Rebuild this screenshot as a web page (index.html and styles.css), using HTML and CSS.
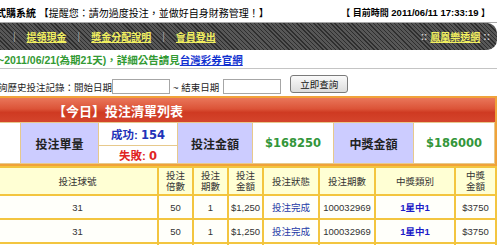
FILE: index.html
```html
<!DOCTYPE html>
<html lang="zh-Hant">
<head>
  <meta charset="UTF-8">
  <meta name="viewport" content="width=device-width, initial-scale=1.0">
  <title>投注清單列表</title>
  <link rel="stylesheet" href="styles.css">
</head>
<body>

  <div class="page">

    <!-- Top bar -->
    <div class="topbar">
      <div class="title"><b>式購系統</b> 【提醒您：請勿過度投注，並做好自身財務管理！】</div>
      <div class="clock">【 目前時間 <span class="num">2011/06/11 17:33:19</span> 】</div>
    </div>

    <!-- Menu -->
    <div class="menu">
      <div class="menu-links">
        <span class="sep">|</span><a href="#">提領現金</a>
        <span class="sep">|</span><a href="#">獎金分配說明</a>
        <span class="sep">|</span><a href="#">會員登出</a>
      </div>
      <div class="menu-site">
        <span class="dots">::</span><a href="#">鳳凰樂透網</a><span class="dots">::</span>
      </div>
    </div>

    <!-- Notice -->
    <div class="notice">~2011/06/21(為期21天)，詳細公告請見<a href="#">台灣彩券官網</a></div>

    <!-- Search -->
    <form class="search">
      <span class="label">詢歷史投注記錄：開始日期</span>
      <input type="text" class="date">
      <span class="label tilde">~ 結束日期</span>
      <input type="text" class="date">
      <button type="button">立即查詢</button>
    </form>

    <!-- Today summary -->
    <div class="today">
      <div class="today-title">【今日】投注清單列表</div>
      <table class="summary">
        <colgroup>
          <col style="width:24px"><col style="width:78px"><col style="width:79px">
          <col style="width:75px"><col style="width:81px"><col style="width:80px"><col>
        </colgroup>
        <tr class="top">
          <td rowspan="2"></td>
          <th rowspan="2">投注單量</th>
          <td class="ok">成功: <span class="n">154</span></td>
          <th rowspan="2">投注金額</th>
          <td rowspan="2" class="money">$168250</td>
          <th rowspan="2">中獎金額</th>
          <td rowspan="2" class="money">$186000</td>
        </tr>
        <tr class="bottom">
          <td class="fail">失敗: <span class="n">0</span></td>
        </tr>
      </table>
    </div>

    <!-- Bet list -->
    <table class="bets">
      <colgroup>
        <col style="width:161px"><col style="width:35px"><col style="width:35px"><col style="width:35px">
        <col style="width:56px"><col style="width:56px"><col style="width:80px"><col>
      </colgroup>
      <tr class="head">
        <th>投注球號</th>
        <th>投注<br>倍數</th>
        <th>投注<br>期數</th>
        <th>投注<br>金額</th>
        <th>投注狀態</th>
        <th>投注期數</th>
        <th>中獎類別</th>
        <th>中獎<br>金額</th>
      </tr>
      <tr>
        <td>31</td><td>50</td><td>1</td><td>$1,250</td>
        <td class="status">投注完成</td><td>100032969</td>
        <td class="prize">1星中1</td><td>$3750</td>
      </tr>
      <tr>
        <td>31</td><td>50</td><td>1</td><td>$1,250</td>
        <td class="status">投注完成</td><td>100032969</td>
        <td class="prize">1星中1</td><td>$3750</td>
      </tr>
      <tr>
        <td>31</td><td>50</td><td>1</td><td>$1,250</td>
        <td class="status">投注完成</td><td>100032969</td>
        <td class="prize">1星中1</td><td>$3750</td>
      </tr>
    </table>

  </div>

</body>
</html>
```

FILE: styles.css
```css
/* Basic Styling */
* {
  box-sizing: border-box;
}
body {
  margin: 0;
  background: #fff;
  color: #222;
  font-family: "Liberation Sans", "Noto Sans CJK TC", sans-serif;
  font-size: 10px;
  overflow: hidden;
}
a {
  text-decoration: underline;
}

/* page is cropped on the left */
.page {
  width: 501px;
  margin-left: -4px;
}

/* Top bar */
.topbar {
  height: 23px;
  display: flex;
  justify-content: space-between;
  align-items: center;
  padding: 2px 7px 0 0;
  border-bottom: 1px solid #a8a8a8;
  color: #000;
}
.title b {
  font-weight: bold;
}
.clock {
  font-size: 9px;
  font-weight: bold;
}
.clock .num {
  font-size: 9.5px;
}

/* Menu */
.menu {
  height: 27px;
  display: flex;
  justify-content: space-between;
  align-items: center;
  padding-right: 7px;
  border-radius: 0 10px 10px 0;
  background: repeating-linear-gradient(45deg, #2e2e2e 0 1px, #575757 1px 3px);
}
.menu-links {
  display: flex;
  align-items: center;
  padding-left: 6px;
}
.menu a {
  color: #f2f060;
  font-weight: bold;
}
.sep {
  color: #a0a0a0;
  margin: 0 11px;
}
.menu-site {
  display: flex;
  align-items: center;
  gap: 3px;
}
.dots {
  color: #d0d0d0;
  font-size: 10px;
  font-weight: bold;
}

/* Notice */
.notice {
  height: 19px;
  padding: 2px 0 0 2px;
  border-bottom: 1px solid #c4c4c4;
  color: #339a33;
  font-size: 10.5px;
  font-weight: bold;
}
.notice a {
  color: #1030d0;
}

/* Search */
.search {
  height: 27px;
  margin: 0;
  padding: 8px 0 0 2px;
  display: flex;
  align-items: center;
}
.search .label {
  font-size: 9.5px;
  color: #222;
}
.search .tilde {
  margin: 0 4px 0 3px;
}
.date {
  width: 58px;
  height: 15px;
  border: 1px solid #a6a6a6;
  padding: 0;
}
.search button {
  width: 58px;
  height: 18px;
  margin: 0 0 5px 9px;
  padding: 0;
  border: 1px solid #7a7a7a;
  border-radius: 3px;
  background: linear-gradient(#fafafa, #dcdcdc);
  font-family: "Noto Sans CJK TC", sans-serif;
  font-size: 9.5px;
  color: #111;
}

/* Today summary */
.today {
  border: 2px solid #f0a23a;
  border-left: none;
}
.today-title {
  height: 24px;
  padding-left: 57px;
  display: flex;
  align-items: center;
  color: #fff;
  font-size: 13px;
  font-weight: bold;
  background: linear-gradient(#e9765a, #dc5438 45%, #cf3a22 60%, #d4452c);
}
.summary {
  width: 100%;
  table-layout: fixed;
  border-collapse: collapse;
}
.summary td, .summary th {
  border: 1px solid #e7c98c;
  padding: 0;
  text-align: center;
  background: #fff;
}
.summary th {
  background: #ccccff;
  font-size: 12px;
  font-weight: bold;
  color: #222;
}
.summary .top td.ok {
  height: 23px;
}
.summary .bottom td {
  height: 18px;
}
.ok, .fail {
  font-size: 11.5px;
  font-weight: bold;
}
.ok {
  color: #2232b8;
}
.fail {
  color: #e02424;
}
.summary .n {
  font-family: "DejaVu Sans", sans-serif;
}
.money {
  color: #33963a;
  font-family: "DejaVu Sans", sans-serif;
  font-size: 11.5px;
  font-weight: bold;
}

/* Bet list */
.bets {
  width: 100%;
  table-layout: fixed;
  border-collapse: collapse;
}
.bets td, .bets th {
  border: 2px solid #f3c53f;
  padding: 0;
  text-align: center;
  color: #333;
}
.bets th {
  height: 28px;
  background: #ffffd4;
  font-size: 9.5px;
  font-weight: normal;
  line-height: 11px;
}
.bets td {
  height: 24px;
  background: #fffffa;
  font-size: 9.5px;
}
.bets .status {
  color: #1e3aa6;
}
.bets .prize {
  color: #1c1cc8;
  font-weight: bold;
}
```
